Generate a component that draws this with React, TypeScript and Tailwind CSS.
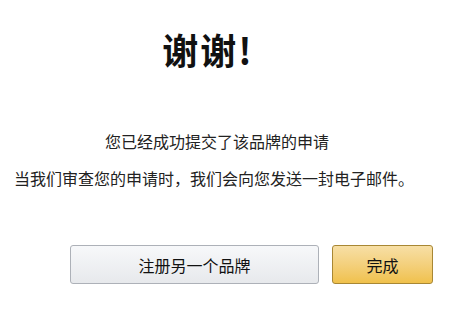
export default function App() {
  return (
    <div className="w-[452px] h-[321px] bg-white text-[#1a1a1a] font-['Microsoft_YaHei','Noto_Sans_CJK_SC',sans-serif] overflow-hidden">
      <div className="flex flex-col items-center">
        <h1 className="mt-[25px] pr-[36px] text-[36px] leading-[48px] font-bold text-[#111] tracking-[2px]">谢谢!</h1>
        <p className="mt-[56px] pr-[18px] text-[16px] leading-[24px] text-[#222]">您已经成功提交了该品牌的申请</p>
        <p className="mt-[13px] pr-[24px] text-[16px] leading-[24px] text-[#222]">当我们审查您的申请时，我们会向您发送一封电子邮件。</p>
      </div>
      <div className="flex gap-[13px] pl-[70px] mt-[55px]">
        <button className="w-[249px] h-[39px] rounded-[3px] border border-[#adb1b8] bg-gradient-to-b from-[#f7f8fa] to-[#e7e9ec] text-[16px] text-[#111]">
          注册另一个品牌
        </button>
        <button className="w-[101px] h-[39px] rounded-[3px] border border-[#a88734] bg-gradient-to-b from-[#f7dfa5] to-[#f0c14b] text-[16px] text-[#111]">
          完成
        </button>
      </div>
    </div>
  );
}
